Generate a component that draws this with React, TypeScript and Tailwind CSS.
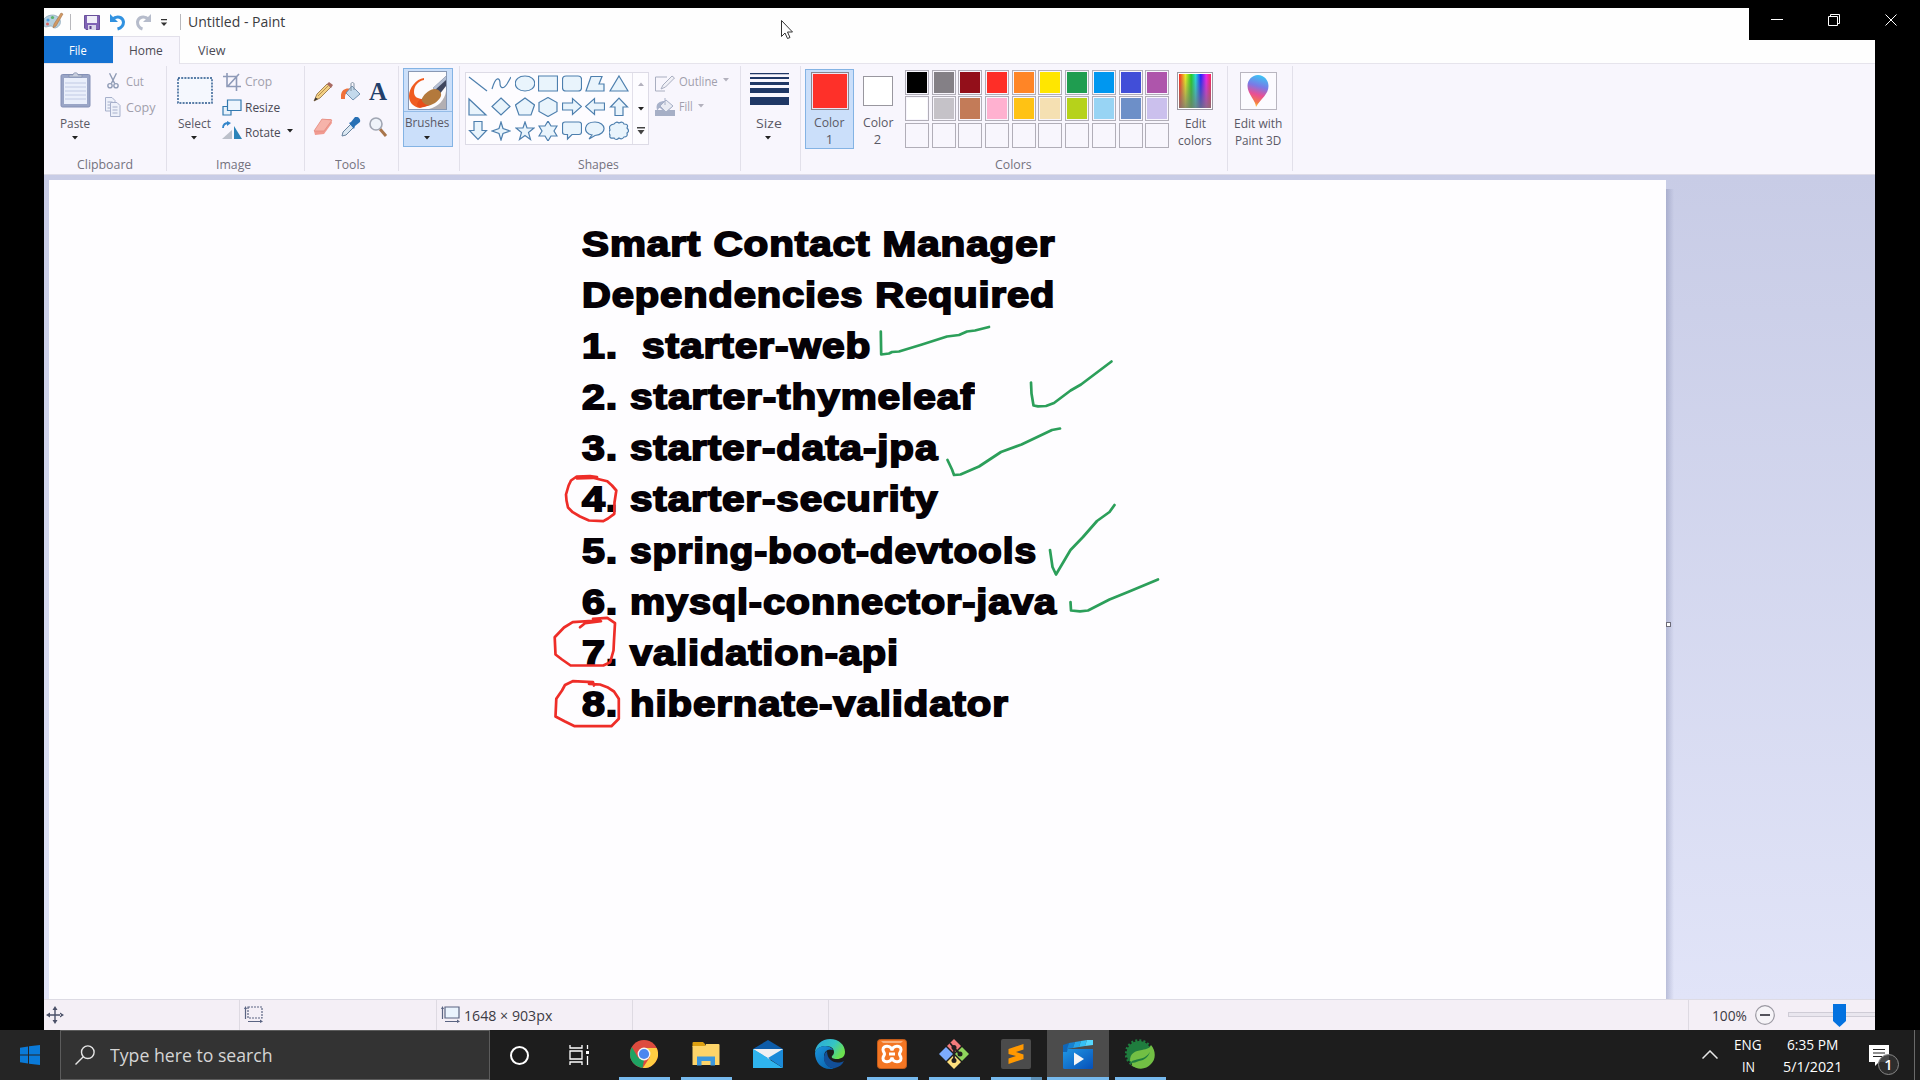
import React, { useLayoutEffect, useRef, useState } from "react";

/* A single line of text scaled horizontally to an exact width. */
function Fit({ w, className = "", children }: { w: number; className?: string; children: React.ReactNode }) {
  const ref = useRef<HTMLSpanElement>(null);
  const [scale, setScale] = useState(1);
  useLayoutEffect(() => {
    if (ref.current) setScale(w / ref.current.offsetWidth);
  }, [w]);
  return (
    <div className={"shrink-0 whitespace-nowrap " + className} style={{ width: w }}>
      <span ref={ref} className="inline-block origin-left whitespace-pre" style={{ transform: `scaleX(${scale})` }}>
        {children}
      </span>
    </div>
  );
}

function Caret({ className = "" }: { className?: string }) {
  return (
    <svg viewBox="0 0 6 4" className={"h-[4px] w-[6px] shrink-0 " + className} fill="currentColor">
      <path d="M0 0h6L3 3.6z" />
    </svg>
  );
}

function Group({ className, label, labelW = 0, labelClass = "pr-1", children }: { className: string; label?: string; labelW?: number; labelClass?: string; children: React.ReactNode }) {
  return (
    <div className={"flex h-[105px] shrink-0 flex-col border-r border-[#e2e0ea] " + className}>
      <div className="flex h-[88px] shrink-0 items-start">{children}</div>
      <div className={"flex h-5 shrink-0 justify-center text-[13px] leading-5 text-[#74727e] " + labelClass}>
        {label && <Fit w={labelW}>{label}</Fit>}
      </div>
    </div>
  );
}

function TitleBar() {
  return (
    <div className="flex h-7 shrink-0 items-center">
      <svg viewBox="0 0 20 20" className="h-5 w-5">
        <path d="M0 7C3 3 11 1 15 6c3 4 1 9-4 10-2 0-2-2-4-2-3 0-5 2-7 0z" fill="#b5cfdd" stroke="#8fa9bb" strokeWidth=".8" />
        <circle cx="4" cy="8" r="1.6" fill="#4c9fe0" />
        <circle cx="8.500" cy="5.500" r="1.600" fill="#5bb36a" />
        <circle cx="3.500" cy="12" r="1.500" fill="#d96565" />
        <path d="M17 1l2 1-7 12-3 2 1-4z" fill="#d39a63" stroke="#a8744a" strokeWidth=".6" />
      </svg>
      <div className="ml-[6px] h-4 w-px bg-[#b8b8bc]" />
      <svg viewBox="0 0 16 15" className="ml-[13px] h-[15px] w-4">
        <path d="M.5.5h15v14H2l-1.500-1.500z" fill="#8063b5" stroke="#69509a" />
        <path d="M3 1h10v7H3z" fill="#f0eef8" />
        <path d="M4 10h8v5H4z" fill="#d9d4ea" />
        <path d="M5.500 11h2v3h-2z" fill="#59418c" />
      </svg>
      <svg viewBox="0 0 17 18" className="ml-[9px] h-[18px] w-[17px]" fill="none">
        <path d="M1 1v8h8z" fill="#3192e0" />
        <path d="M3 6.500C8 2 14 4 14.500 9c0 4-2.500 6-6 7" stroke="#3192e0" strokeWidth="3" />
      </svg>
      <svg viewBox="0 0 17 18" className="ml-[9px] h-[18px] w-[17px]" fill="none">
        <path d="M16 1v8H8z" fill="#b6bccb" />
        <path d="M14 6.500C9 2 3 4 2.500 9c0 4 2 6 5 7" stroke="#b6bccb" strokeWidth="3" />
      </svg>
      <svg viewBox="0 0 8 8" className="ml-2 mt-[2px] h-2 w-2" fill="#333">
        <path d="M1 0h6v1.200H1zM.8 3.500h6.400L4 7z" />
      </svg>
      <div className="ml-[12px] h-4 w-px bg-[#b8b8bc]" />
      <Fit w={97} className="ml-[7px] text-[14px] leading-5 text-[#3b3b40]">Untitled - Paint</Fit>
    </div>
  );
}

function Tabs() {
  return (
    <div className="flex h-[28px] shrink-0 border-b border-[#e6e4ec] text-[13px] leading-[29px] text-[#4c4b55]">
      <div className="flex w-[69px] justify-center bg-[#1472d2] pr-px text-white"><Fit w={18}>File</Fit></div>
      <div className="flex h-[28px] w-[67px] justify-center border-r border-t border-[#e2e0ea] bg-[#f8f6fd]"><Fit w={34} className="-mt-px">Home</Fit></div>
      <Fit w={27} className="ml-[18px]">View</Fit>
    </div>
  );
}

function Clipboard() {
  return (
    <Group className="w-[123px]" label="Clipboard" labelW={56} labelClass="">
      <div className="ml-[15px] flex w-[32px] flex-col items-center pt-[6px]">
        <svg viewBox="0 0 31 36" className="h-9 w-[31px]">
          <rect x="1" y="2.500" width="29" height="32.500" rx="1.500" fill="#9aa5c6" stroke="#8490b6" />
          <path d="M4 6h23v26H4z" fill="#eaeffb" />
          <path d="M5 11h21M5 15h21M5 19h21M5 23h21M5 27h21" stroke="#c1cae4" />
          <path d="M9 5V3h4c0-3 5-3 5 0h4v2z" fill="#c9cfde" stroke="#8792ae" strokeWidth=".8" />
        </svg>
        <Fit w={30} className="mt-[7px] text-[13px] leading-4 text-[#5a5965]">Paste</Fit>
        <Caret className="mr-px mt-[5px] text-[#222]" />
      </div>
      <div className="ml-[14px] flex flex-col text-[13px] leading-[18px] text-[#a19fac]">
        <div className="mt-[6px] flex gap-[7px]">
          <svg viewBox="0 0 14 18" className="ml-[2px] h-[18px] w-3" fill="none" stroke="#8f9bb5" strokeWidth="1.600">
            <path d="M3 0l6 12M11 0L5 12" /><circle cx="3.500" cy="14.500" r="2.500" /><circle cx="10.500" cy="14.500" r="2.500" />
          </svg>
          <Fit w={18}>Cut</Fit>
        </div>
        <div className="mt-[7px] flex gap-[5px]">
          <svg viewBox="0 0 16 20" className="h-5 w-4" fill="#eef1fa" stroke="#a7b0cb">
            <path d="M.5.5H7l3 3V14H.5z" /><path d="M2.500 5h5M2.500 8h5M2.500 11h5" />
            <path d="M5.500 5.500H12l3 3v11H5.500z" /><path d="M7.500 10h5M7.500 13h5M7.500 16h5" />
          </svg>
          <Fit w={29} className="mt-px">Copy</Fit>
        </div>
      </div>
    </Group>
  );
}

function ImageGroup() {
  return (
    <Group className="w-[138px]" label="Image" labelW={35}>
      <div className="ml-[10px] flex w-[36px] flex-col items-center pt-[11px]">
        <svg viewBox="0 0 36 27" className="h-[27px] w-9"><rect x="1" y="1" width="34" height="25" fill="#f5f8fe" stroke="#24548a" strokeWidth="1.400" strokeDasharray="2 1.200" /></svg>
        <Fit w={33} className="mr-px mt-[11px] text-[13px] leading-4 text-[#5a5965]">Select</Fit>
        <Caret className="mr-[2px] mt-[5px] text-[#222]" />
      </div>
      <div className="ml-[9px] flex flex-col text-[13px] leading-[18px] text-[#4a4955]">
        <div className="mt-[7px] flex gap-[3px] text-[#a19fac]">
          <svg viewBox="0 0 20 18" className="h-[18px] w-5" fill="none" stroke="#8e9ab8" strokeWidth="1.600"><path d="M5 0v13.500h14M1 3.500h13.500V18M6 13L17 1" /></svg>
          <Fit w={27} className="-mt-px">Crop</Fit>
        </div>
        <div className="mt-[8px] flex gap-[3px]">
          <svg viewBox="0 0 20 17" className="h-[17px] w-5" stroke="#3379b0" strokeWidth="1.200"><path d="M1 7.500h8V16H1z" fill="#e8f2fb" /><path d="M5.500 1h13.500v10.500H5.500z" fill="#eef5fd" /></svg>
          <Fit w={35} className="-mt-px">Resize</Fit>
        </div>
        <div className="mt-[5px] flex">
          <svg viewBox="0 0 20 18" className="h-[18px] w-5"><path d="M0 18L10 9v9z" fill="#bcc0ca" /><path d="M12 5v13h8z" fill="#2c83b9" /><path d="M1 7c0-4 2-5 6-5" fill="none" stroke="#3385ca" strokeWidth="1.800" /><path d="M5 0l4 2-4 3z" fill="#3385ca" /></svg>
          <Fit w={36} className="ml-[3px] mt-[2px]">Rotate</Fit>
          <Caret className="ml-[6px] mt-[8px] text-[#222]" />
        </div>
      </div>
    </Group>
  );
}

function Tools() {
  return (
    <Group className="w-[94px]" label="Tools" labelW={30} labelClass="pr-[4px]">
      <div className="ml-[8px] mt-4 grid grid-cols-[20px_20px_20px] gap-x-[7.500px] gap-y-[15px]">
        <svg viewBox="0 0 20 20" className="h-5 w-5"><path d="M1 19l3-7L14 2l4 3L7 16z" fill="#f3d084" stroke="#8d6b3f" strokeWidth=".8" /><path d="M14 2l2-2 4 3-2 3z" fill="#a86a62" /><path d="M1 19l1.500-3.500L5 17z" fill="#333" /><path d="M5 14L15 4" stroke="#a97f3f" strokeWidth=".8" /></svg>
        <svg viewBox="0 0 20 20" className="h-5 w-5"><path d="M0 17C-1 8 4 5 11 7l-4 4c-3 0-3 3-3 6z" fill="#f0713a" /><path d="M11 4l8 8-7 6-7-7z" fill="#c3d9ec" stroke="#6889a9" strokeWidth=".9" /><path d="M10 9V2c0-2 3-2 3 0v6" fill="none" stroke="#8090a0" /></svg>
        <div className="h-5 w-5 text-center font-['Liberation_Serif'] text-[25px] font-bold leading-5 text-[#22406b]">A</div>
        <svg viewBox="0 0 20 20" className="h-5 w-5"><path d="M1 14L9 2l9 0 1 4-8 11-9 1z" fill="#f19a90" /><path d="M1 14l8-12 10 1-8 11z" fill="#f6b3aa" stroke="#e3897e" strokeWidth=".7" /></svg>
        <svg viewBox="0 0 20 20" className="h-5 w-5"><path d="M1 19l1-4 8-8 3 3-8 8z" fill="#dce8f2" stroke="#66829e" /><path d="M8 6l2-1 4-5c3-1 6 2 5 5l-5 4-1 3z" fill="#2870b4" /></svg>
        <svg viewBox="0 0 20 20" className="h-5 w-5"><path d="M12 12l6 7" stroke="#a8754b" strokeWidth="3" /><circle cx="8" cy="7" r="6" fill="#eef3fa" stroke="#a0a6b3" strokeWidth="1.600" /></svg>
      </div>
    </Group>
  );
}

function Brushes() {
  return (
    <Group className="w-[61px]">
      <div className="ml-[4px] mt-[2px] flex h-[79px] w-[50px] flex-col items-center border border-[#84b3e4] bg-[#cbdffa]">
        <svg viewBox="0 0 39 39" className="mr-px mt-[2px] h-[39px] w-[39px] shrink-0">
          <rect x=".5" y=".5" width="38" height="38" fill="#fcfbfd" stroke="#8898b4" />
          <path d="M38 20v18H21C30 36 37 29 38 20z" fill="#b3afb3" />
          <path d="M38 5L25 17l6 7 7-9z" fill="#3f475f" /><path d="M38 5L25 17l2 2L38 9z" fill="#b4bfd4" />
          <path d="M16 7C8 8 1 17 1 25c0 6 4 11 11 12l7-3-4-6c-5 0-9-2-9-7C6 15 10 10 16 9z" fill="#f05c20" />
          <path d="M13 30c2-6 7-11 13-12 6 0 9 5 6 9-4 6-12 9-18 8z" fill="#b3793c" /><path d="M10 36c-2-3 0-6 3-8 2 4 4 6 8 6-3 2-8 3-11 2z" fill="#e84d18" />
        </svg>
        <div className="mt-px h-px w-full shrink-0 bg-[#94bce8]" />
        <Fit w={44} className="mr-[2px] mt-[2px] text-[13px] leading-4 text-[#5a5965]">Brushes</Fit>
        <Caret className="mr-[2px] mt-[6px] text-[#222]" />
      </div>
    </Group>
  );
}

const SHAPES: string[] = [
  "M1 3L19 17", "M1 15C5 1 9 4 9 9s3 7 7 1l4-7", "M10 2c13 0 13 15 0 15s-13-15 0-15z", "M.5 2h19v15H.500z", "M4 2h12q3.500 0 3.500 3.500v8q0 3.500-3.500 3.500H4q-3.500 0-3.500-3.500v-8Q.500 2 4 2z", "M6 2.500h11L14 10h5v7H1z", "M10 2l9 15H1z",
  "M1 2v16h17z", "M10 1l9 8.500-9 8.500-9-8.500z", "M10 1l9.500 7-3.500 10H4L.500 8z", "M10 .5l9 5v9l-9 5-9-5v-9z", "M.500 6h10V1.500l9 8-9 8V13h-10z", "M19.500 6h-10V1.500l-9 8 9 8V13h10z", "M6 18.500V10H1.500L10 1l8.500 9H14v8.500z",
  "M6 .5v9H1.500L10 18.500 18.500 9.500H14v-9z", "M10 1l2 6.500L19 10l-7 2.500L10 19l-2-6.500L1 10l7-2.500z", "M10 1l2 6h7l-5.500 4.500 2 7L10 14.500l-5.500 4 2-7L1 7h7z", "M10 0l3 5h6l-3 5 3 5h-6l-3 5-3-5H1l3-5-3-5h6z", "M3 1h14q2.500 0 2.500 2.500V11q0 2.500-2.500 2.500H10L5.500 18v-4.500H3Q.500 13.500.500 11V3.500Q.500 1 3 1z", "M7 14C-3 12-1 1 10 1s13 12 0 13.500L4 18z", "M5 3q2-3 5-1 4-2 5 1 5 0 3 4 3 3 0 5 1 4-3 4-2 3-5 1-3 3-5 0-5 1-4-3-2-3 0-5-2-5 4-6z",
];

function ShapesGroup() {
  return (
    <Group className="w-[281px]" label="Shapes" labelW={41}>
      <div className="ml-[5px] mt-[6px] flex h-[73px] w-[184px] border border-[#dddbe6] bg-[#fdfcff]">
        <div className="grid w-[167px] shrink-0 auto-rows-[20px] grid-cols-[repeat(7,20px)] content-start gap-x-[3.600px] gap-y-[3.300px] border-r border-[#e2e0ea] pl-[1.500px] pt-px">
          {SHAPES.map((d, i) => (
            <svg key={i} viewBox="0 0 20 20" className="h-5 w-5" fill={i < 2 ? "none" : "#e9f4fc"} stroke="#4d7fae" strokeWidth="1.200"><path d={d} /></svg>
          ))}
        </div>
        <div className="flex w-4 flex-col items-center">
          <Caret className="mt-[9px] rotate-180 text-[#b3b1bd]" />
          <Caret className="mt-[21px] text-[#222]" />
          <svg viewBox="0 0 8 8" className="mt-[16px] h-2 w-2" fill="#444"><path d="M0 0h8v1.500H0zM.5 3h7L4 7.500z" /></svg>
        </div>
      </div>
      <div className="ml-[6px] mt-[9px] text-[13px] leading-[18px] text-[#a19fac]">
        <div className="flex">
          <svg viewBox="0 0 20 17" className="h-[17px] w-5" fill="#f0f0f6" stroke="#a9aec0"><path d="M.5 16V2H12" fill="none" /><path d="M6 14l2-4 9-9 2.500 2-9 9z" /><path d="M.5 16H10" /></svg>
          <Fit w={39} className="-mt-[3px] ml-[4px]">Outline</Fit>
          <Caret className="ml-[5px] mt-[3px] text-[#b3b1bd]" />
        </div>
        <div className="mt-[5px] flex">
          <svg viewBox="0 0 20 19" className="h-[19px] w-5"><path d="M0 13h20v6H0z" fill="#a6afc6" /><path d="M2 13C0 6 5 4 10 4l7 6-6 6-6-5c-2 0-1 2-3 2z" fill="#a8b2ca" /><path d="M11 3l7 6-7 6-6-6z" fill="#e9ebf3" stroke="#a6afc6" /><path d="M10 8V1" stroke="#a6afc6" /></svg>
          <Fit w={14} className="ml-[4px]">Fill</Fit>
          <Caret className="ml-[5px] mt-[7px] text-[#b3b1bd]" />
        </div>
      </div>
    </Group>
  );
}

function SizeGroup() {
  return (
    <Group className="w-[60px]">
      <div className="flex w-full flex-col items-center pr-[3px] pt-[7px]">
        <svg viewBox="0 0 39 32" className="h-8 w-[39px]" fill="#1f3765"><path d="M0 0h39v1.300H0zM0 4h39v2H0zM0 9h39v3H0zM0 15h39v5H0zM0 24h39v8H0z" /></svg>
        <Fit w={26} className="mt-[10px] text-[13px] leading-4 text-[#5a5965]">Size</Fit>
        <Caret className="mr-[2px] mt-[5px] text-[#222]" />
      </div>
    </Group>
  );
}

const PALETTE: string[] = [
  "bg-[#000000]", "bg-[#848086]", "bg-[#930f1a]", "bg-[#fe2e27]", "bg-[#ff8526]", "bg-[#ffe600]", "bg-[#1f9d50]", "bg-[#0097f0]", "bg-[#414ed8]", "bg-[#ae55ab]",
  "bg-[#ffffff]", "bg-[#c5c2c8]", "bg-[#c37b58]", "bg-[#ffb1d0]", "bg-[#ffc214]", "bg-[#f5e0b2]", "bg-[#b6d21b]", "bg-[#98d4f4]", "bg-[#6d8fc8]", "bg-[#cbc0ed]",
  "", "", "", "", "", "", "", "", "", "",
];

function Colors() {
  return (
    <Group className="w-[427px]" label="Colors" labelW={37} labelClass="pr-[2px]">
      <div className="ml-[4px] mt-[3px] flex h-[80px] w-[49px] flex-col items-center border border-[#84b3e4] bg-[#cbdffa] text-[13px] leading-[17px] text-[#5a5965]">
        <div className="mt-[2px] h-[38px] w-[38px] shrink-0 border border-[#88868f] bg-[#fe3029] shadow-[inset_0_0_0_1px_#ece4f2]" />
        <Fit w={30} className="mr-px mt-[4px]">Color</Fit>
        <div>1</div>
      </div>
      <div className="ml-[7px] mt-[10px] flex w-[33px] flex-col items-center text-[13px] leading-[17px] text-[#5a5965]">
        <div className="h-[30px] w-[30px] shrink-0 border border-[#99979f] bg-white" />
        <Fit w={30} className="mt-[8px]">Color</Fit>
        <div>2</div>
      </div>
      <div className="ml-[11px] mt-[4px] grid auto-rows-[25px] grid-cols-[repeat(10,24px)] gap-x-[2.700px] gap-y-[1.300px]">
        {PALETTE.map((c, i) => (
          <div key={i} className="h-[25px] w-6 border border-[#b1aeb8] p-px">{c && <div className={"h-full w-full " + c} />}</div>
        ))}
      </div>
      <div className="ml-[8px] mt-[6px] flex w-[36px] flex-col items-center text-[13px] leading-[17px] text-[#5a5965]">
        <div className="h-[38px] w-9 shrink-0 border border-[#9d9aa4] bg-white p-px">
          <div className="h-full w-full bg-[linear-gradient(to_right,#f22,#ee2_20%,#2c2_38%,#2dd_52%,#22f_68%,#e2e_85%,#f25)]"><div className="h-full w-full bg-gradient-to-b from-transparent to-[#777]/80" /></div>
        </div>
        <Fit w={21} className="mt-[5px]">Edit</Fit>
        <Fit w={34}>colors</Fit>
      </div>
    </Group>
  );
}

function Paint3D() {
  return (
    <Group className="w-[65px]">
      <div className="ml-[5px] mt-[6px] flex w-[50px] flex-col items-center text-[13px] leading-[17px] text-[#5a5965]">
        <div className="flex h-[38px] w-[37px] shrink-0 items-center justify-center border border-[#b9b6c0] bg-[#fcfbff]">
          <svg viewBox="0 0 22 32" className="h-8 w-[22px]">
            <defs>
              <linearGradient id="pin" x1="0.600" y1="0" x2="0.400" y2="1"><stop offset="0" stopColor="#3ac6f5" /><stop offset=".35" stopColor="#7a7ae6" /><stop offset=".62" stopColor="#ea4f94" /><stop offset=".85" stopColor="#f4794a" /><stop offset="1" stopColor="#ffc93a" /></linearGradient>
            </defs>
            <path d="M11 0c6 0 10.500 5 10.500 11 0 8-7 12-12.500 21 0-6-8.500-13-8.500-21C.5 5 5 0 11 0z" fill="url(#pin)" />
          </svg>
        </div>
        <Fit w={48} className="mt-[5px]">Edit with</Fit>
        <Fit w={46}>Paint 3D</Fit>
      </div>
    </Group>
  );
}

const LINES: { no?: string; text: string; w: number }[] = [
  { text: "Smart Contact Manager", w: 473 },
  { text: "Dependencies Required", w: 473 },
  { no: "1.", text: "starter-web", w: 229 },
  { no: "2.", text: "starter-thymeleaf", w: 345 },
  { no: "3.", text: "starter-data-jpa", w: 308 },
  { no: "4.", text: "starter-security", w: 308 },
  { no: "5.", text: "spring-boot-devtools", w: 407 },
  { no: "6.", text: "mysql-connector-java", w: 427 },
  { no: "7.", text: "validation-api", w: 269 },
  { no: "8.", text: "hibernate-validator", w: 379 },
];

const GREEN = [
  "880.800,331 881.200,354 889,353 892,351.500 899,351 922,344 947,336 959,334.500 967,331 975,330 989,326.500",
  "1031,382 1031.500,393 1033.500,405 1038,405.800 1046,405.500 1054,402.500 1070.600,390 1081,384 1111.500,361",
  "947.500,459.500 952,469 954,474.500 960.500,474 979,466 1001,451.500 1021.500,444 1052,429.500 1060,428",
  "1050,549.500 1052.500,566.500 1056,574 1070.500,549.500 1083,536.500 1097,520.500 1109.500,511.500 1114.500,504.500",
  "1070.500,601.500 1071,610 1080,610.800 1088,610 1109.500,599 1128,591.500 1158,579",
];
const RED = [
  "597,476.700 590,475.500 576.700,476 571,480 568.600,485 566,494 566.500,500 568,507 572.700,511.700 580,516 589,520 603.300,520.700 608,518 614.300,513.300 614.500,502 616.300,490 612,485 607.300,480.700 600,479 593,477.300 577,478",
  "580,626.700 585,622.700 601,620.700 593,618.300 607.300,617.300 615,622.700 614,640 613.500,650 610.200,661.700 603.300,665 570.600,665 562,659 555.500,654 554.700,636.700 564,627 572.700,621.700 597,620",
  "594,685 593,681.700 572.700,680.700 565,684.500 562,690 556.300,698.300 555.500,716 565,721 574.700,725.700 611.400,725.700 618.800,718.300 618.800,698.300 614,691 607.300,686.700 600,684 589,683.300",
];

function Canvas() {
  return (
    <div className="relative flex h-[824px] shrink-0 bg-gradient-to-b from-[#c8cce6] to-[#e1e4f8] pl-[5px] pt-[5px]">
      <div className="h-[819px] w-[1617px] shrink-0 bg-[#fefdff] pl-[533px] pt-[39px] font-['Liberation_Sans',sans-serif] text-[35.500px] font-bold leading-[51px] tracking-[0.8px] text-[#050106] [-webkit-text-stroke:1.800px_#050106]">
        {LINES.map((l) => (
          <div key={l.text} className="flex h-[51.100px]">
            {l.no && <Fit w={36}>{l.no}</Fit>}
            <Fit w={l.w} className={l.no === "1." ? "ml-[24px]" : l.no ? "ml-[12px]" : ""}>{l.text}</Fit>
          </div>
        ))}
      </div>
      <div className="mt-[9px] w-2 bg-gradient-to-r from-[#6f76a0]/35 to-transparent" />
      <div className="absolute left-[1622px] top-[447px] h-[5px] w-[5px] border border-[#6d6b78] bg-white" />
      <svg viewBox="44 174.500 1831 824" className="absolute left-0 top-0 h-[824px] w-[1831px]" fill="none" strokeWidth="2.700" strokeLinecap="round" strokeLinejoin="round">
        {GREEN.map((p) => <polyline key={p} points={p} stroke="#2c9f5a" />)}
        {RED.map((p) => <polyline key={p} points={p} stroke="#ee2d28" />)}
      </svg>
    </div>
  );
}

function StatusBar() {
  return (
    <div className="flex h-[31px] shrink-0 border-t border-[#dddbe4] bg-[#f4eff6] text-[14.500px] leading-[32px] text-[#3c3b44]">
      <div className="flex w-[196px] border-r border-[#dedae2] pl-[2px] pt-[6px]">
        <svg viewBox="0 0 18 18" className="h-[18px] w-[18px]" fill="#4a5068"><path d="M8.300 3h1.400v12H8.300zM3 8.300h12v1.400H3zM9 0l2.500 4h-5zM9 18l-2.500-4h5zM0 9l4-2.500v5zM18 9l-4-2.500v5z" /></svg>
      </div>
      <div className="flex w-[197px] border-r border-[#dedae2] pl-[4px] pt-[6px]">
        <svg viewBox="0 0 19 17" className="h-[17px] w-[19px]" fill="none" stroke="#5a6482" strokeWidth="1.200"><path d="M4 1h14v11H4z" strokeDasharray="2 1" /><path d="M1.500 2v11M4 15.500h13" /><path d="M0 3l1.500-3L3 3zM16 13.500l3 2-3 1.500z" fill="#5a6482" stroke="none" /></svg>
      </div>
      <div className="flex w-[196px] border-r border-[#dedae2] pl-[4px]">
        <svg viewBox="0 0 19 17" className="mt-[6px] h-[17px] w-[19px]" fill="none" stroke="#5a6482" strokeWidth="1.200"><path d="M4 1h14v11H4z" fill="#eaf3fd" /><path d="M1.500 2v11M4 15.500h13" /><path d="M0 3l1.500-3L3 3zM16 13.500l3 2-3 1.500z" fill="#5a6482" stroke="none" /></svg>
        <Fit w={88} className="ml-[4px]">1648 × 903px</Fit>
      </div>
      <div className="w-[196px] border-r border-[#dedae2]" />
      <div className="w-[860px] border-r border-[#dedae2]" />
      <Fit w={35} className="ml-[23px]">100%</Fit>
      <svg viewBox="0 0 20 20" className="ml-[8px] mt-[5px] h-5 w-5"><circle cx="10" cy="10" r="9.300" fill="#f6f4f8" stroke="#9b99a2" strokeWidth="1.200" /><path d="M5 9h10v2H5z" fill="#54535c" /></svg>
      <div className="relative ml-[13px] mt-[12px] h-[5px] grow border border-r-0 border-[#cfccd6] bg-[#e9e6ee]">
        <svg viewBox="0 0 13 23" className="absolute left-[44px] top-[-9px] h-[23px] w-[13px]"><path d="M0 0h13v17l-6.500 6L0 17z" fill="#0372e0" /></svg>
      </div>
    </div>
  );
}

function TaskItem({ children, className = "", bar = "w-[51px]" }: { children: React.ReactNode; className?: string; bar?: string }) {
  return (
    <div className={"flex h-full w-[62px] shrink-0 flex-col items-center " + className}>
      <div className="flex h-[47px] items-center justify-center">{children}</div>
      <div className={"h-[3px] bg-[#76b9ed] " + bar} />
    </div>
  );
}

function SpringIcon() {
  return (
    <svg viewBox="0 0 30 30" className="h-[30px] w-[30px]">
      <circle cx="14" cy="14.500" r="12.500" fill="#1f7d3e" />
      <circle cx="14" cy="14.500" r="13" fill="none" stroke="#1f7d3e" strokeWidth="2.600" strokeDasharray="2 2.080" />
      <path d="M26 6c5 6 5 14 0 19-5 6-14 6-20 1 2 0 1-4-1-4 0-8 5-10 12-11 5-1 8-2 9-5z" fill="#72bf44" />
      <path d="M7 22c2-1 4-1 7-2 6-1 9-4 11-7-2 5-5 8-11 9-3 1-5 2-8 2z" fill="#1f7d3e" />
    </svg>
  );
}

function Taskbar() {
  return (
    <div className="flex h-[50px] w-full shrink-0 bg-[#1d1d1d] text-white">
      <div className="flex w-[60px] items-center justify-center bg-[#252525]">
        <svg viewBox="0 0 20 20" className="h-5 w-5" fill="#0a7ad8"><path d="M0 2.800L8 1.500v8H0zM9 1.300L20 0v9.500H9zM0 10.500h8v8l-8-1.300zM9 10.500h11V20L9 18.700z" /></svg>
      </div>
      <div className="flex w-[430px] shrink-0 items-center border border-[#5c5c5c] bg-[#333333] pl-[14px]">
        <svg viewBox="0 0 20 20" className="h-5 w-5" fill="none" stroke="#e6e6e6" strokeWidth="1.400"><circle cx="12.800" cy="7.200" r="6.300" /><path d="M8.300 11.700L.500 19.500" /></svg>
        <Fit w={163} className="ml-[15px] text-[18px] leading-6 text-[#d5d5d5]">Type here to search</Fit>
      </div>
      <div className="ml-[20px] mt-[16px] h-[19px] w-[19px] shrink-0 rounded-full border-[2.500px] border-white" />
      <svg viewBox="0 0 21 20" className="ml-[40px] mt-[15px] h-5 w-[21px] shrink-0" fill="none" stroke="#fff" strokeWidth="1.300"><path d="M1 0v3h12V0M1 20v-3h12v3M1 6h12v8H1zM18.500 0v4M18.500 11v9" /><path d="M17 6h3v3h-3z" fill="#fff" stroke="none" /></svg>
      <div className="ml-[23px] flex">
        <TaskItem>
          <svg viewBox="0 0 28 28" className="h-7 w-7">
            <circle cx="14" cy="14" r="14" fill="#dd4b3e" />
            <path d="M1.900 7L8 17.500 14 20l-1.500 8A14 14 0 0 1 1.900 7z" fill="#1ea362" />
            <path d="M14 8h12.600A14 14 0 0 1 12.800 28L20 17z" fill="#ffcd42" />
            <circle cx="14" cy="14" r="6.400" fill="#f5f5f5" /><circle cx="14" cy="14" r="5.100" fill="#4a86f0" />
          </svg>
        </TaskItem>
        <TaskItem>
          <svg viewBox="0 0 28 24" className="h-6 w-7"><path d="M.500 1q0-1 1-1H11l2 2v3H.500z" fill="#dc9f10" /><path d="M.500 4H13l1-2h12.500q1 0 1 1v20H.500z" fill="#fdd469" /><path d="M5 23.500v-9h18v9h-4.500V19h-9v4.500z" fill="#3b97dd" /></svg>
        </TaskItem>
        <TaskItem bar="hidden">
          <svg viewBox="0 0 30 28" className="h-7 w-[30px]"><path d="M0 9l15-9 15 9v6H0z" fill="#0d5ca8" /><path d="M0 9h30v7L15 20 0 16z" fill="#f0f0f2" /><path d="M0 9l15 9L0 28z" fill="#2ba8e6" /><path d="M0 9l30 19H0z" fill="#2fb4ee" /><path d="M30 9v19L15 18z" fill="#1b8ad8" /></svg>
        </TaskItem>
        <TaskItem bar="hidden">
          <svg viewBox="0 0 30 30" className="h-[30px] w-[30px]">
            <defs>
              <linearGradient id="edgeTop" x1="0" y1="0" x2="1" y2=".5"><stop offset="0" stopColor="#2aa5dd" /><stop offset=".6" stopColor="#35c5c4" /><stop offset="1" stopColor="#6be04f" /></linearGradient>
              <linearGradient id="edgeLow" x1="0" y1="0" x2=".8" y2="1"><stop offset="0" stopColor="#1c96dd" /><stop offset="1" stopColor="#0a62ad" /></linearGradient>
            </defs>
            <path d="M0 14C0 6 7 0 15 0c9 0 15 6 15 13 0 5-4 7-8 7-4 0-6-1-5-3 1-1 2-2 2-4 0-4-4-6-8-6-6 0-10 3-11 7z" fill="url(#edgeTop)" />
            <path d="M0 14c1-4 5-7 10-7 4 0 7 2 8 4-5-2-9 1-9 7 0 7 6 12 11 11-2 1-4 1-5 1C6 30 0 23 0 14z" fill="url(#edgeLow)" />
            <path d="M12 12c-6 5-3 18 8 17 4-1 7-3 9-7-8 4-17 0-17-10z" fill="#124f98" />
          </svg>
        </TaskItem>
        <TaskItem>
          <svg viewBox="0 0 30 30" className="h-[30px] w-[30px]"><rect x=".5" y=".5" width="29" height="29" rx="3" fill="#f37623" stroke="#c35c1a" /><path d="M4 2h22l-2 2H6z" fill="#f8b07c" /><path d="M15 11.500C14 6 6 6 6 10.500c0 2.500 1.500 3 1.500 4.500S6 17 6 19.500c0 4.500 8 4.500 9-1 1 5.500 9 5.500 9 1 0-2.500-1.500-3-1.500-4.500s1.500-2 1.500-4.500c0-4.500-8-4.500-9 1zM12 15h6" fill="none" stroke="#fff" strokeWidth="3" /></svg>
        </TaskItem>
        <TaskItem>
          <svg viewBox="0 0 30 30" className="h-[30px] w-[30px]"><path d="M15 0l7 7-7 7-7-7z" fill="#f47c7c" /><path d="M23 8l7 7-7 7-7-7z" fill="#8fd45c" /><path d="M7 8l7 7-7 7-7-7z" fill="#7cabff" /><path d="M15 16l7 7-7 7-7-7z" fill="#ffe07d" /><path d="M11 4l4 5v13M15 9l6 6" fill="none" stroke="#231f20" strokeWidth="1.800" /><circle cx="15" cy="8.500" r="2.500" fill="#231f20" /><circle cx="21" cy="15" r="2.500" fill="#231f20" /><circle cx="15" cy="21.500" r="2.500" fill="#231f20" /></svg>
        </TaskItem>
        <div className="flex h-full w-[62px] shrink-0 flex-col items-center">
          <div className="flex h-[47px] items-center"><svg viewBox="0 0 30 30" className="h-[30px] w-[30px]"><rect width="30" height="30" rx="2" fill="#4b4b4b" /><path d="M7.500 10L22.500 5v5.500L15 13l7.500 2.500v4.500L7.500 25v-5.500l7.500-2.500-7.500-2z" fill="#ff9800" /></svg></div>
          <div className="flex"><div className="h-[3px] w-10 bg-[#76b9ed]" /><div className="h-[3px] w-[11px] bg-[#5c8fb5]" /></div>
        </div>
        <TaskItem className="bg-[#4c4c4c]" bar="w-[62px]">
          <svg viewBox="0 0 30 29" className="mt-px h-[29px] w-[30px]">
            <defs><linearGradient id="film" x1="0" y1="0" x2="1" y2="1"><stop offset="0" stopColor="#2097e4" /><stop offset="1" stopColor="#0650b8" /></linearGradient></defs>
            <path d="M0 9h30v18.500q0 1.500-1.500 1.500h-27Q0 29 0 27.500z" fill="url(#film)" />
            <path d="M0 5l6-2-2 9H0z" fill="#0f66b8" /><path d="M6 3l6-1-2 6-6 1z" fill="#1681d0" /><path d="M12 2l6-1-2 6-6 1z" fill="#26a4ea" /><path d="M18 1l6-1-2 6-6 1z" fill="#35c0f5" /><path d="M24 0h6v5l-8 1z" fill="#55d8ff" />
            <path d="M11 12.500l10 6.500-10 6.500z" fill="#f5f5f5" />
          </svg>
        </TaskItem>
        <TaskItem><SpringIcon /></TaskItem>
      </div>
      <div className="grow" />
      <svg viewBox="0 0 16 9" className="mt-[20px] h-[9px] w-4 shrink-0" fill="none" stroke="#e8e8e8" strokeWidth="1.500"><path d="M.5 8.500L8 1l7.500 7.500" /></svg>
      <div className="ml-[16px] flex w-[28px] flex-col items-center pt-[4px] text-[14.500px] leading-[22px]"><Fit w={28}>ENG</Fit><Fit w={13}>IN</Fit></div>
      <div className="ml-[20px] flex w-[60px] flex-col items-center pt-[4px] text-[14.500px] leading-[22px]"><Fit w={51}>6:35 PM</Fit><Fit w={59}>5/1/2021</Fit></div>
      <svg viewBox="0 0 32 32" className="ml-[26px] mt-[14px] h-8 w-8 shrink-0">
        <path d="M1 1h20v17H11l-4 4v-4H1z" fill="#fff" /><path d="M5 5.500h12M5 9h12M5 12.500h9" stroke="#222" strokeWidth="1.200" />
        <circle cx="20.500" cy="20.500" r="10" fill="#303030" fillOpacity=".88" stroke="#888" /><text x="20.500" y="25.500" textAnchor="middle" fill="#fff" fontSize="14.500" fontWeight="600">1</text>
      </svg>
      <div className="ml-[14px] mr-[5px] h-full w-px shrink-0 bg-[#6a6a6a]" />
    </div>
  );
}

export default function App() {
  return (
    <div className="relative flex h-[1080px] w-[1920px] flex-col overflow-hidden bg-black font-['Open_Sans','Noto_Sans',sans-serif]">
      <div className="ml-[44px] mt-2 flex h-[1022px] w-[1831px] shrink-0 flex-col bg-[#fefefe]">
        <TitleBar />
        <Tabs />
        <div className="flex h-[111px] shrink-0 border-b border-[#dedce8] bg-[#f8f6fd] pt-[2px]">
          <Clipboard />
          <ImageGroup />
          <Tools />
          <Brushes />
          <ShapesGroup />
          <SizeGroup />
          <Colors />
          <Paint3D />
        </div>
        <Canvas />
        <StatusBar />
      </div>
      <Taskbar />
      <div className="absolute left-[1749px] top-0 flex h-10 w-[171px] bg-black">
        <svg viewBox="0 0 171 40" className="h-10 w-[171px]" fill="none" stroke="#fff" strokeWidth="1"><path d="M22 19.500h12M79.500 16.500h9v9h-9zM81.500 16v-1.500h9v9H89M136.500 14.500l11 11M147.500 14.500l-11 11" /></svg>
      </div>
      <svg viewBox="0 0 12 19" className="absolute left-[781px] top-[20px] h-[19px] w-3" fill="#fff" stroke="#333" strokeWidth="1"><path d="M.5.5v16l3.500-3.500 2.500 5.500 2.500-1-2.500-5.500h5z" /></svg>
    </div>
  );
}
